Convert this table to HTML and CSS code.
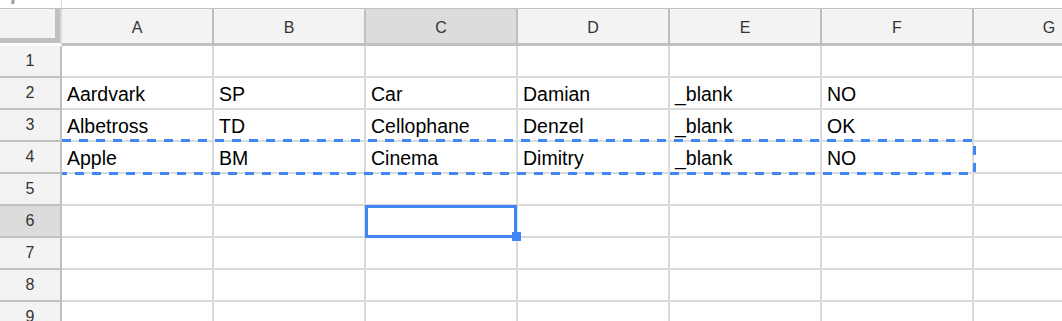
FILE: index.html
```html
<!DOCTYPE html>
<html lang="en">
<head>
  <meta charset="UTF-8">
  <title>Sheet1</title>
  <link rel="stylesheet" href="styles.css">
</head>
<body>
  <!-- Bottom edge of the formula bar -->
  <div class="formula-bar">
    <div class="fx"><span>fx</span></div>
    <div class="formula-input"></div>
  </div>

  <div class="sheet">
    <!-- Column headers -->
    <div class="corner"></div>
    <div class="col-head">A</div>
    <div class="col-head">B</div>
    <div class="col-head current">C</div>
    <div class="col-head">D</div>
    <div class="col-head">E</div>
    <div class="col-head">F</div>
    <div class="col-head">G</div>

    <div class="row-head">1</div>
    <div class="cell"></div><div class="cell"></div><div class="cell"></div><div class="cell"></div><div class="cell"></div><div class="cell"></div><div class="cell"></div>

    <div class="row-head">2</div>
    <div class="cell">Aardvark</div><div class="cell">SP</div><div class="cell">Car</div><div class="cell">Damian</div><div class="cell">_blank</div><div class="cell">NO</div><div class="cell"></div>

    <div class="row-head">3</div>
    <div class="cell">Albetross</div><div class="cell">TD</div><div class="cell">Cellophane</div><div class="cell">Denzel</div><div class="cell">_blank</div><div class="cell">OK</div><div class="cell"></div>

    <div class="row-head">4</div>
    <div class="cell">Apple</div><div class="cell">BM</div><div class="cell">Cinema</div><div class="cell">Dimitry</div><div class="cell">_blank</div><div class="cell">NO</div><div class="cell"></div>

    <div class="row-head">5</div>
    <div class="cell"></div><div class="cell"></div><div class="cell"></div><div class="cell"></div><div class="cell"></div><div class="cell"></div><div class="cell"></div>

    <div class="row-head current">6</div>
    <div class="cell"></div><div class="cell"></div>
    <div class="cell active"><div class="cursor"></div><div class="fill-handle"></div></div>
    <div class="cell"></div><div class="cell"></div><div class="cell"></div><div class="cell"></div>

    <div class="row-head">7</div>
    <div class="cell"></div><div class="cell"></div><div class="cell"></div><div class="cell"></div><div class="cell"></div><div class="cell"></div><div class="cell"></div>

    <div class="row-head">8</div>
    <div class="cell"></div><div class="cell"></div><div class="cell"></div><div class="cell"></div><div class="cell"></div><div class="cell"></div><div class="cell"></div>

    <div class="row-head">9</div>
    <div class="cell"></div><div class="cell"></div><div class="cell"></div><div class="cell"></div><div class="cell"></div><div class="cell"></div><div class="cell"></div>

    <!-- Marching ants around the copied range A4:F4 -->
    <svg class="copy-range" width="915" height="36" viewBox="0 0 915 36">
      <path d="M0 1.5 H912.5 V34.5 H0" fill="none" stroke="#4285f4" stroke-width="3" stroke-dasharray="9 8"/>
    </svg>
  </div>
</body>
</html>
```

FILE: styles.css
```css
/* Basic resets */
* { margin: 0; padding: 0; box-sizing: border-box; }
html, body { height: 100%; font-family: 'Liberation Sans', Arial, sans-serif; }
body {
  background: #fff;
  overflow: hidden;
}

/* Formula bar strip (only its lower edge is visible) */
.formula-bar {
  display: flex;
  height: 9px;
  border-bottom: 1px solid #c0c0c0;
  overflow: hidden;
}
.fx {
  width: 62px;
  border-right: 1px solid #d9d9d9;
  padding-left: 11px;
}
.fx span {
  display: block;
  margin-top: -21px;
  font-family: 'Liberation Serif', serif;
  font-style: italic;
  font-weight: bold;
  font-size: 22px;
  color: #9e9e9e;
}
.formula-input { flex: 1; }

/* Grid */
.sheet {
  position: relative;
  display: grid;
  grid-template-columns: 62px repeat(7, 152px);
  grid-template-rows: 37px repeat(9, 32px);
  width: max-content;
}

.corner {
  background: #f3f3f3;
  border-right: 2px solid #d9d9d9;
  border-bottom: 3px solid #fff;
  box-shadow: inset -5px -5px 0 #c0c0c0;
}

.col-head {
  display: flex;
  align-items: center;
  justify-content: center;
  padding-top: 3px;
  background: #f3f3f3;
  border-right: 2px solid #c0c0c0;
  border-bottom: 3px solid #c0c0c0;
  font-size: 16px;
  color: #333;
}

.row-head {
  display: flex;
  align-items: center;
  justify-content: center;
  background: #f3f3f3;
  border-right: 2px solid #c0c0c0;
  border-bottom: 2px solid #c0c0c0;
  font-size: 16px;
  color: #333;
}

.col-head.current,
.row-head.current {
  background: #dcdcdc;
}

.cell {
  display: flex;
  align-items: center;
  padding: 3px 0 0 5px;
  border-right: 2px solid #dadada;
  border-bottom: 2px solid #dadada;
  font-size: 19.5px;
  color: #000;
  white-space: nowrap;
}

/* Active cell cursor */
.cell.active { position: relative; }
.cursor {
  position: absolute;
  left: -1px;
  top: -1px;
  width: 152px;
  height: 33px;
  border: 3px solid #4285f4;
}
.fill-handle {
  position: absolute;
  left: 146px;
  top: 26px;
  width: 9px;
  height: 9px;
  background: #4285f4;
}

.copy-range {
  position: absolute;
  left: 62px;
  top: 130px;
}
```
